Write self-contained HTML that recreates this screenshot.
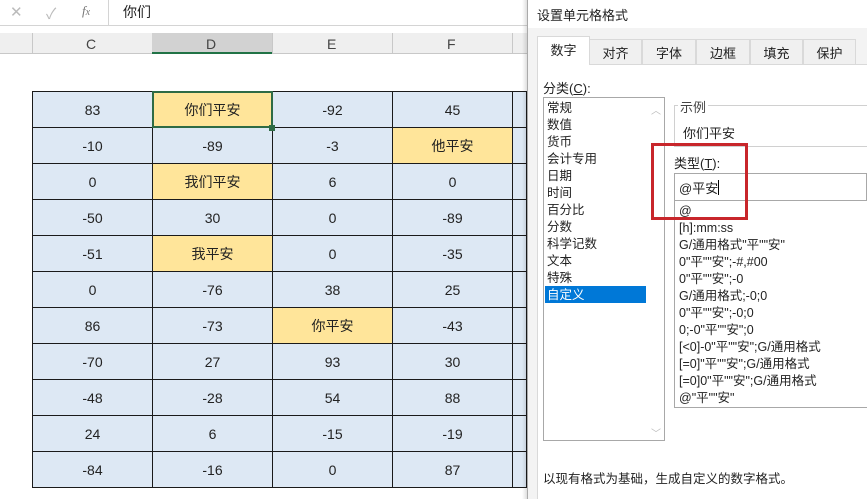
<!DOCTYPE html>
<html><head><meta charset="utf-8"><style>
*{margin:0;padding:0;box-sizing:border-box}
body{width:867px;height:499px;overflow:hidden;background:#fff;position:relative;font-family:"Liberation Sans","Noto Sans CJK SC",sans-serif;font-size:13px;color:#222}
.a{position:absolute}
.c{position:absolute;width:120px;height:36px;border-right:1px solid #1a1a1a;border-bottom:1px solid #1a1a1a;background:#dde8f4;text-align:center;line-height:36px;font-size:14px;color:#222}
.y{background:#ffe59a}
.li{position:absolute;left:547px;font-size:12.5px;line-height:17px}
.ti{position:absolute;left:679px;font-size:12.5px;line-height:17px}
.tab{position:absolute;top:37px;height:27px;border:1px solid #d9d9d9;border-bottom:none;background:#fff;text-align:center;line-height:27px;font-size:13px}
</style></head><body>
<div class="a" style="left:0;top:0;width:527px;height:26px;background:#fff;border-bottom:1px solid #d4d4d4"></div>
<div class="a" style="left:10px;top:3px;color:#bbb;font-size:15px">✕</div>
<div class="a" style="left:46px;top:3px;color:#bbb;font-size:15px">✓</div>
<div class="a" style="left:82px;top:3px;color:#777;font-size:13px;font-style:italic;font-family:'Liberation Serif',serif">f<span style="font-size:10px">x</span></div>
<div class="a" style="left:108px;top:0;width:1px;height:26px;background:#d4d4d4"></div>
<div class="a" style="left:123px;top:2px;font-size:14px">你们</div>
<div class="a" style="left:0;top:33px;width:527px;height:21px;background:#efefef;border-bottom:1px solid #c8c8c8"></div>
<div class="a" style="left:152px;top:33px;width:120px;height:21px;background:#d2d2d2;border-bottom:2px solid #217346"></div>
<div class="a" style="left:32px;top:33px;width:1px;height:21px;background:#c8c8c8"></div>
<div class="a" style="left:272px;top:33px;width:1px;height:21px;background:#c8c8c8"></div>
<div class="a" style="left:392px;top:33px;width:1px;height:21px;background:#c8c8c8"></div>
<div class="a" style="left:512px;top:33px;width:1px;height:21px;background:#c8c8c8"></div>
<div class="a" style="left:86px;top:36px;font-size:14px;color:#444">C</div>
<div class="a" style="left:206px;top:36px;font-size:14px;color:#444">D</div>
<div class="a" style="left:327px;top:36px;font-size:14px;color:#444">E</div>
<div class="a" style="left:447px;top:36px;font-size:14px;color:#444">F</div>
<div class="a" style="left:32px;top:91px;width:500px;height:397px;border-left:1px solid #1a1a1a;border-top:1px solid #1a1a1a;background:#dde8f4"></div>
<div id="t"></div>
<script>
var d=[["83","你们平安","-92","45"],["-10","-89","-3","他平安"],["0","我们平安","6","0"],["-50","30","0","-89"],["-51","我平安","0","-35"],["0","-76","38","25"],["86","-73","你平安","-43"],["-70","27","93","30"],["-48","-28","54","88"],["24","6","-15","-19"],["-84","-16","0","87"]];
var h="";for(var r=0;r<11;r++){for(var c=0;c<4;c++){var v=d[r][c];var y=/[^\d\-]/.test(v);h+='<div class="c'+(y?' y':'')+'" style="left:'+(33+c*120)+'px;top:'+(92+r*36)+'px">'+v+'</div>';}h+='<div class="c" style="left:513px;top:'+(92+r*36)+'px;width:14px"></div>';}
document.getElementById("t").innerHTML=h;
</script>
<div class="a" style="left:152px;top:91px;width:121px;height:37px;border:2px solid #2e6b45"></div>
<div class="a" style="left:269px;top:125px;width:6px;height:6px;background:#2e6b45"></div>
<div class="a" style="left:522px;top:0;width:6px;height:499px;background:linear-gradient(90deg,rgba(0,0,0,0),rgba(0,0,0,.15))"></div>
<div class="a" style="left:527px;top:0;width:340px;height:499px;background:#fff;border-left:1px solid #aaa"></div>
<div class="a" style="left:537px;top:5px;font-size:13px">设置单元格格式</div>
<div class="a" style="left:528px;top:28px;width:339px;height:471px;background:#f3f3f3"></div>
<div class="a" style="left:537px;top:64px;width:330px;height:435px;background:#fff;border-top:1px solid #d9d9d9;border-left:1px solid #d9d9d9"></div>
<div class="tab" style="left:589px;width:53px;top:39px;height:25px;background:#f0f0f0">对齐</div>
<div class="tab" style="left:642px;width:54px;top:39px;height:25px;background:#f0f0f0">字体</div>
<div class="tab" style="left:696px;width:54px;top:39px;height:25px;background:#f0f0f0">边框</div>
<div class="tab" style="left:750px;width:53px;top:39px;height:25px;background:#f0f0f0">填充</div>
<div class="tab" style="left:803px;width:53px;top:39px;height:25px;background:#f0f0f0">保护</div>
<div class="tab" style="left:537px;width:53px;top:36px;height:29px;border-bottom:none">数字</div>
<div class="a" style="left:543px;top:78px;font-size:13px">分类(<u>C</u>):</div>
<div class="a" style="left:543px;top:97px;width:122px;height:344px;border:1px solid #a8a8a8;background:#fff"></div>
<div class="a" style="left:651px;top:102px;color:#bbb;font-size:10px">︿</div>
<div class="a" style="left:651px;top:425px;color:#bbb;font-size:10px">﹀</div>
<div class="a" style="left:545px;top:286px;width:101px;height:17px;background:#0078d7"></div>
<div class="li" style="top:100px">常规</div><div class="li" style="top:117px">数值</div><div class="li" style="top:134px">货币</div><div class="li" style="top:151px">会计专用</div><div class="li" style="top:168px">日期</div><div class="li" style="top:185px">时间</div><div class="li" style="top:202px">百分比</div><div class="li" style="top:219px">分数</div><div class="li" style="top:236px">科学记数</div><div class="li" style="top:253px">文本</div><div class="li" style="top:270px">特殊</div><div class="li" style="top:287px;color:#fff">自定义</div>
<div class="a" style="left:674px;top:105px;width:193px;height:42px;border-top:1px solid #d0d0d0;border-left:1px solid #d0d0d0;border-bottom:1px solid #d0d0d0"></div>
<div class="a" style="left:678px;top:97px;background:#fff;padding:0 2px;font-size:13px;color:#444">示例</div>
<div class="a" style="left:683px;top:123px;font-size:13px">你们平安</div>
<div class="a" style="left:674px;top:153px;font-size:13px">类型(<u>T</u>):</div>
<div class="a" style="left:674px;top:173px;width:193px;height:28px;border:1px solid #a8a8a8;background:#fff"></div>
<div class="a" style="left:679px;top:178px;font-size:13px">@平安<span style="display:inline-block;width:1px;height:15px;background:#000;vertical-align:-2px"></span></div>
<div class="a" style="left:674px;top:200px;width:193px;height:208px;border:1px solid #a8a8a8;border-right:none;background:#fff"></div>
<div class="ti" style="top:203px">@</div>
<div class="ti" style="top:220px">[h]:mm:ss</div>
<div class="ti" style="top:237px">G/通用格式"平""安"</div>
<div class="ti" style="top:254px">0"平""安";-#,#00</div>
<div class="ti" style="top:271px">0"平""安";-0</div>
<div class="ti" style="top:288px">G/通用格式;-0;0</div>
<div class="ti" style="top:305px">0"平""安";-0;0</div>
<div class="ti" style="top:322px">0;-0"平""安";0</div>
<div class="ti" style="top:339px">[&lt;0]-0"平""安";G/通用格式</div>
<div class="ti" style="top:356px">[=0]"平""安";G/通用格式</div>
<div class="ti" style="top:373px">[=0]0"平""安";G/通用格式</div>
<div class="ti" style="top:390px">@"平""安"</div>
<div class="a" style="left:651px;top:143px;width:97px;height:77px;border:3px solid #c8262b"></div>
<div class="a" style="left:543px;top:468px;font-size:12.5px">以现有格式为基础，生成自定义的数字格式。</div>
</body></html>
